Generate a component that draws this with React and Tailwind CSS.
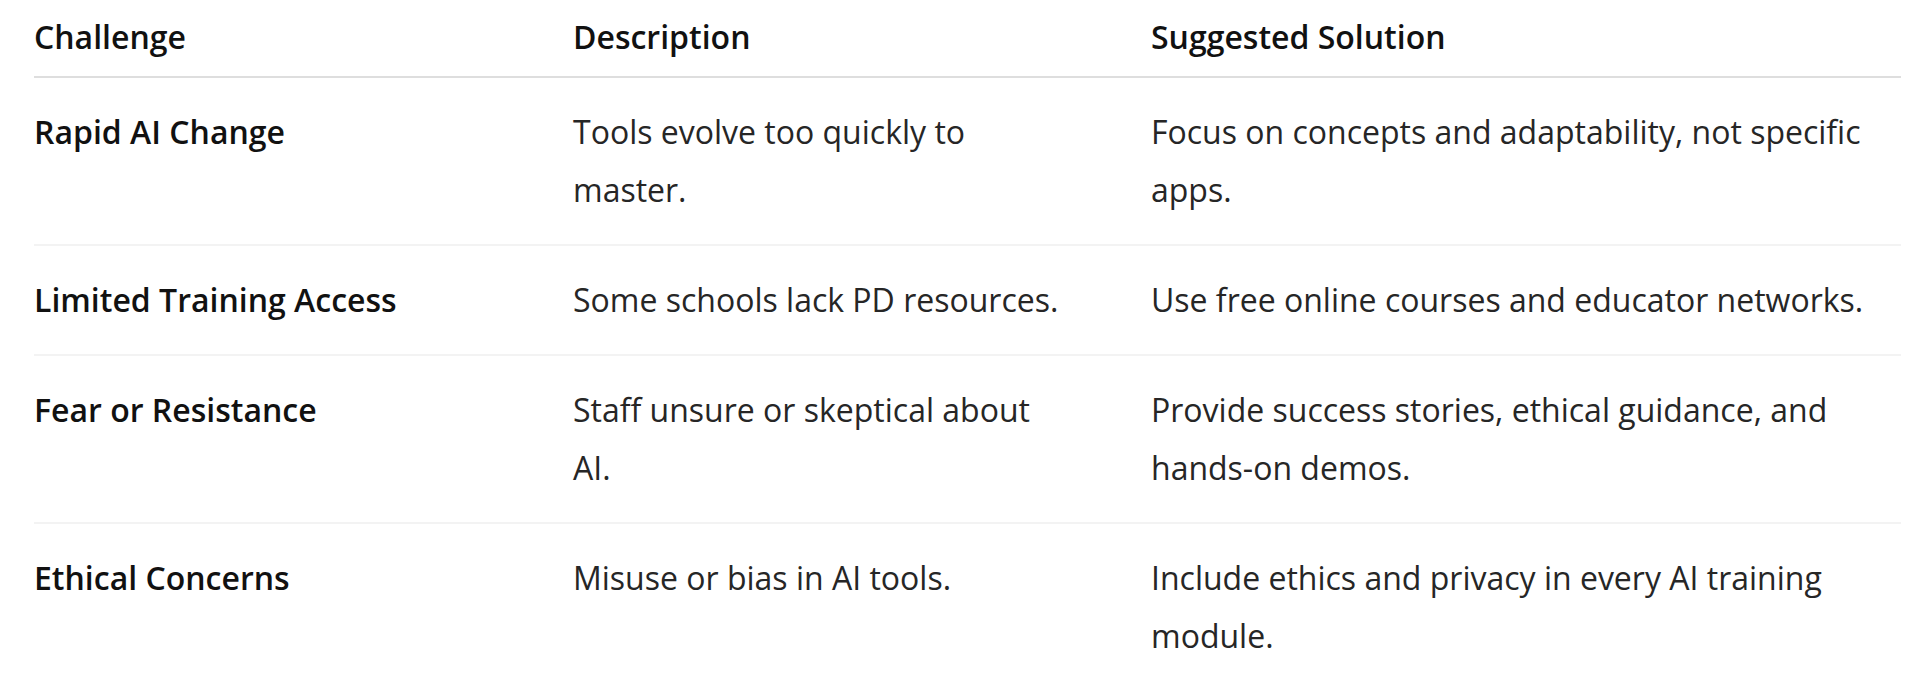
const rows = [
    {
        challenge: 'Rapid AI Change',
        description: 'Tools evolve too quickly to master.',
        solution: 'Focus on concepts and adaptability, not specific apps.'
    },
    {
        challenge: 'Limited Training Access',
        description: 'Some schools lack PD resources.',
        solution: 'Use free online courses and educator networks.'
    },
    {
        challenge: 'Fear or Resistance',
        description: 'Staff unsure or skeptical about AI.',
        solution: 'Provide success stories, ethical guidance, and hands-on demos.'
    },
    {
        challenge: 'Ethical Concerns',
        description: 'Misuse or bias in AI tools.',
        solution: 'Include ethics and privacy in every AI training module.'
    }
];

export default function App() {
    return (
        <div
            className="w-full h-[685px] overflow-hidden bg-white pl-[34px] pr-[19px]"
            style={{ fontFamily: '"Open Sans", "Noto Sans", sans-serif' }}
        >
            <div className="text-[32px] leading-[58px] text-[#262626]">
                {/* header */}
                <div className="grid grid-cols-[539px_578px_1fr] border-b-2 border-[#dedede] pt-2 pb-[10px] font-semibold text-[#111]">
                    <div>Challenge</div>
                    <div>Description</div>
                    <div>Suggested Solution</div>
                </div>

                {rows.map((row, i) => (
                    <div
                        key={row.challenge}
                        className={`grid grid-cols-[539px_578px_1fr] py-[25px] ${i < rows.length - 1 ? 'border-b-2 border-[#f3f3f3]' : ''}`}
                    >
                        <div className="font-semibold text-[#111] pr-6">{row.challenge}</div>
                        <div className="pr-[86px]">{row.description}</div>
                        <div className="pr-6">{row.solution}</div>
                    </div>
                ))}
            </div>
        </div>
    );
}
